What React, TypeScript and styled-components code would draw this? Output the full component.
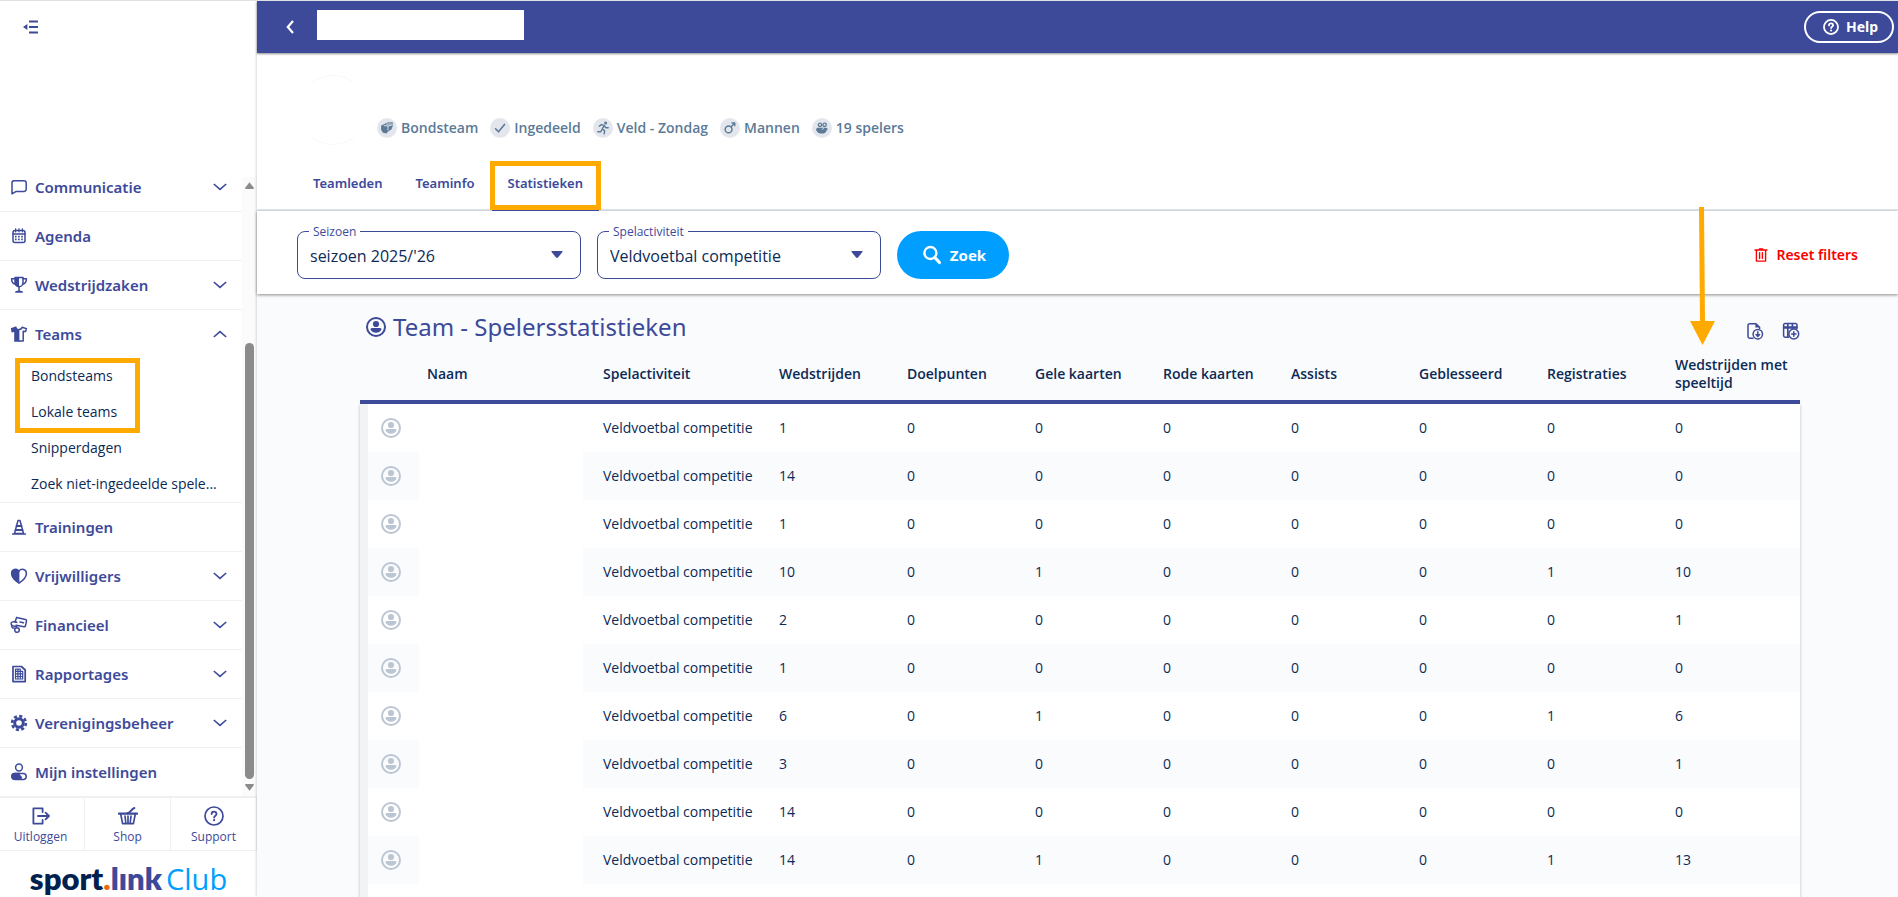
import React from "react";
import styled, { createGlobalStyle, css } from "styled-components";

const indigo = "#3d4a9a";
const navy = "#0b2a55";
const slate = "#5b7a97";
const orange = "#ffaa00";
const azure = "#009fff";
const line = "#eef0f2";
const body = `"Open Sans", "Noto Sans", sans-serif`;
const heading = `"Noto Sans", "Open Sans", sans-serif`;

const GlobalStyle = createGlobalStyle`
  *, *::before, *::after { box-sizing: border-box; }
  body { margin: 0; background: #fff; font-family: ${body}; font-size: 14px; color: ${navy}; }
  button, select { font: inherit; color: inherit; }
  a { color: inherit; text-decoration: none; }
`;

const Shell = styled.div`
  display: flex;
  height: 100vh;
  overflow: hidden;
  border-top: 1px solid #dfe2e3;
`;

/* ---------- sidebar ---------- */

const Sidebar = styled.aside`
  display: flex;
  flex-direction: column;
  flex: 0 0 257px;
  background: #fff;
`;

const SidebarTop = styled.div`
  flex: 0 0 162px;
  padding: 17px 22px;
`;

const PlainButton = styled.button`
  display: inline-flex;
  align-items: center;
  justify-content: center;
  padding: 0;
  border: 0;
  background: none;
  color: ${indigo};
  cursor: pointer;
`;

const NavArea = styled.div`
  display: flex;
  flex: 1;
  min-height: 0;
`;

const Nav = styled.nav`
  flex: 1;
  min-width: 0;
`;

const NavGroup = styled.div`
  border-bottom: 1px solid ${line};
`;

const NavItem = styled.a`
  display: flex;
  align-items: center;
  height: 48px;
  padding: 0 15px 0 10px;
  gap: 7px;
  color: ${indigo};
  font: 600 15px/20px ${heading};
`;

const NavText = styled.span`
  flex: 1;
`;

const SubList = styled.div`
  position: relative;
`;

const SubItem = styled.a`
  display: block;
  height: 36px;
  padding: 0 25px 0 31px;
  overflow: hidden;
  color: ${navy};
  font: 400 14px/36px ${body};
  text-overflow: ellipsis;
  white-space: nowrap;
`;

const SubHighlight = styled.span`
  position: absolute;
  top: 0;
  left: 15px;
  width: 125px;
  height: 75px;
  border: 5px solid ${orange};
  pointer-events: none;
`;

const ScrollTrack = styled.div`
  display: flex;
  flex-direction: column;
  align-items: center;
  width: 15px;
  margin-top: 14px;
  background: #fbfbfb;
`;

const ScrollArrow = styled.svg`
  display: block;
  flex: 0 0 17px;
  width: 9px;
`;

const ScrollSpace = styled.div`
  flex: 149;
`;

const ScrollThumb = styled.div`
  flex: 437;
  width: 9px;
  border-radius: 5px;
  background: #8b8b8b;
`;

const QuickLinks = styled.div`
  display: flex;
  border-top: 2px solid ${line};
  border-bottom: 1px solid ${line};
`;

const QuickLink = styled.a`
  display: flex;
  flex: 87 1 0;
  flex-direction: column;
  align-items: center;
  gap: 2px;
  height: 52px;
  padding-top: 8px;
  border-right: 1px solid ${line};
  color: ${indigo};
  font: 400 12px/18px ${body};
  &:first-child {
    flex-grow: 83;
    padding-right: 3px;
  }
`;

const Logo = styled.div`
  display: flex;
  align-items: baseline;
  justify-content: center;
  height: 46px;
  padding-top: 8px;
  color: #00214d;
  font: 800 31px/38px "Lato", sans-serif;
`;

const LogoDot = styled.span`
  color: #ee6a0c;
`;

const LogoLink = styled.span`
  color: ${indigo};
`;

const LogoClub = styled.span`
  margin-left: 4px;
  color: ${azure};
  font: 400 29px/38px "Open Sans", sans-serif;
`;

/* ---------- main ---------- */

const Main = styled.main`
  display: flex;
  flex: 1;
  flex-direction: column;
  min-width: 0;
  background: #fafbfd;
  box-shadow: 0 0 3px rgba(0, 0, 0, 0.25);
`;

const TopBar = styled.header`
  display: flex;
  align-items: center;
  flex: 0 0 52px;
  padding: 0 4px 0 24px;
  background: ${indigo};
  box-shadow: 0 1px 2px rgba(0, 0, 0, 0.45);
  z-index: 1;
`;

const BackButton = styled(PlainButton)`
  width: 18px;
  height: 24px;
  color: #fff;
`;

const TitleField = styled.div`
  width: 207px;
  height: 30px;
  margin: 0 auto 4px 18px;
  background: #fff;
`;

const HelpButton = styled.button`
  display: flex;
  align-items: center;
  justify-content: center;
  gap: 7px;
  width: 90px;
  height: 32px;
  padding: 0 4px 0 7px;
  border: 2px solid #fff;
  border-radius: 16px;
  background: transparent;
  color: #fff;
  font: 700 14px/20px ${heading};
`;

const TeamPanel = styled.section`
  background: #fff;
  border-bottom: 2px solid #e3e8ed;
`;

const TeamInfo = styled.div`
  display: flex;
  align-items: flex-end;
  gap: 9px;
  height: 108px;
  padding: 0 41px 16px;
`;

const TeamCrest = styled.div`
  width: 70px;
  height: 70px;
  border: 1px solid #f8f8f9;
  border-radius: 50%;
  clip-path: inset(0 14px);
`;

const Badges = styled.ul`
  display: flex;
  gap: 12px;
  margin: 0 0 7px;
  padding: 0;
  list-style: none;
`;

const Badge = styled.li`
  display: flex;
  align-items: center;
  gap: 4px;
  color: ${slate};
  font: 600 14px/20px ${body};
`;

const BadgeIcon = styled.span`
  display: flex;
  align-items: center;
  justify-content: center;
  width: 20px;
  height: 20px;
  border-radius: 50%;
  background: #e3e7ed;
`;

const Tabs = styled.nav`
  display: flex;
  gap: 1px;
  padding: 0 40px;
  margin-bottom: -2px;
`;

const Tab = styled.a<{ $active?: boolean }>`
  position: relative;
  height: 50px;
  padding: 12px 16px 0;
  color: ${indigo};
  font: 600 13px/20px ${heading};
  ${(p) =>
    p.$active &&
    css`
      border-bottom: 2px solid ${indigo};
      &::after {
        content: "";
        position: absolute;
        inset: 0 -2px -1px;
        border: 5px solid ${orange};
      }
    `}
`;

const FilterBar = styled.form`
  display: flex;
  align-items: center;
  gap: 16px;
  flex: 0 0 83px;
  padding: 4px 40px 0;
  background: #fff;
  box-shadow: 0 1px 3px rgba(0, 0, 0, 0.45);
`;

const Field = styled.div`
  position: relative;
  flex: 0 1 284px;
`;

const FieldLabel = styled.label`
  position: absolute;
  top: -7px;
  left: 12px;
  padding: 0 4px;
  background: #fff;
  color: ${indigo};
  font: 400 12px/16px ${body};
`;

const Select = styled.select`
  display: block;
  width: 100%;
  height: 48px;
  padding: 2px 40px 0 12px;
  border: 1px solid ${indigo};
  border-radius: 8px;
  appearance: none;
  background: #fff;
  color: ${navy};
  font: 400 16px/24px ${body};
`;

const Caret = styled.svg`
  position: absolute;
  top: 20px;
  right: 18px;
  pointer-events: none;
`;

const SearchButton = styled.button`
  display: flex;
  align-items: center;
  justify-content: center;
  gap: 8px;
  width: 112px;
  height: 48px;
  padding: 0 5px 0 7px;
  border: 0;
  border-radius: 24px;
  background: ${azure};
  color: #fff;
  font: 700 15px/20px ${heading};
`;

const ResetButton = styled(PlainButton)`
  gap: 8px;
  margin-left: auto;
  color: #fa0000;
  font: 600 14px/20px ${heading};
`;

const Content = styled.section`
  display: flex;
  flex: 1;
  flex-direction: column;
  min-height: 0;
  padding: 0 98px 0 103px;
`;

const TitleRow = styled.div`
  display: flex;
  align-items: center;
  height: 54px;
  padding: 12px 0 0 6px;
`;

const PageTitle = styled.h1`
  flex: 1;
  margin: 0 0 0 7px;
  color: ${indigo};
  font: 400 24px/32px ${heading};
`;

const Tools = styled.div`
  display: flex;
  gap: 18px;
  padding-top: 8px;
`;

const Table = styled.table`
  width: 100%;
  border-collapse: separate;
  border-spacing: 0;
  table-layout: fixed;
`;

const Th = styled.th`
  position: relative;
  height: 56px;
  padding: 0 12px;
  border-bottom: 4px solid ${indigo};
  color: ${navy};
  font: 600 14px/18px ${body};
  text-align: left;
  &:last-child {
    padding-right: 4px;
  }
`;

const Pointer = styled.svg`
  position: absolute;
  left: 27px;
  bottom: 55px;
  z-index: 2;
`;

const Row = styled.tr`
  background: #fff;
  &:nth-child(even) {
    background: #fafbfd;
  }
`;

const Td = styled.td`
  height: 48px;
  padding: 0 12px;
  font: 400 14px/20px ${body};
`;

const AvatarTd = styled(Td)`
  padding: 0 13px;
  border-left: 8px solid #f2f3f5;
  color: #bcc6d3;
  svg {
    display: block;
  }
`;

const NameTd = styled(Td)`
  padding: 0 8px 0 4px;
`;

const NameBlank = styled.div`
  height: 48px;
  background: #fff;
`;

const TableCard = styled.div`
  flex: 1;
  min-height: 0;
`;

const Sheet = styled.tbody`
  box-shadow: 0 1px 3px rgba(0, 0, 0, 0.25);
`;

/* ---------- icons ---------- */

type IconProps = { size?: number; children: React.ReactNode; box?: number };

const IconSvg = styled.svg`
  flex-shrink: 0;
`;

const Svg = ({ size = 18, box = 18, children }: IconProps) => (
  <IconSvg
    width={size}
    height={size}
    viewBox={`0 0 ${box} ${box}`}
    fill="none"
    stroke="currentColor"
    strokeWidth={1.5}
    strokeLinecap="round"
    strokeLinejoin="round"
    aria-hidden="true"
  >
    {children}
  </IconSvg>
);

const solid = { fill: "currentColor", stroke: "none" } as const;

const icons = {
  collapse: (
    <Svg>
      <path d="M7 3.5h9M7 9h9M7 14.5h9" strokeWidth={1.8} strokeLinecap="butt" />
      <path d="M5.4 6v6L1 9z" {...solid} />
    </Svg>
  ),
  chat: (
    <Svg>
      <path d="M4 2.8h10a2.2 2.2 0 0 1 2.2 2.2v6.2a2.2 2.2 0 0 1-2.2 2.2H6.2L2 15.8V5A2.2 2.2 0 0 1 4 2.8z" />
    </Svg>
  ),
  calendar: (
    <Svg>
      <rect x="3" y="3.6" width="12" height="12" rx="2" />
      <path d="M3 7h12" strokeWidth={1.3} />
      <path d="M5.6 1.8v3M9 1.8v3M12.4 1.8v3" strokeWidth={1.3} />
      <path d="M5 9.6h8M5 12.4h8" strokeWidth={1.6} strokeDasharray="1.6 1.5" strokeLinecap="butt" />
    </Svg>
  ),
  trophy: (
    <Svg>
      <path d="M5 1.5h8v5.2a4 4 0 0 1-8 0z" />
      <path d="M5 1.5h4v9.2a4 4 0 0 1-4-4z" {...solid} />
      <path d="M5 2.8H1.6c0 3.4 1.4 5 3.8 5.4M13 2.8h3.4c0 3.4-1.4 5-3.8 5.4M9 10.6v4.6" />
      <path d="M5 16.8c0-1.6 1.4-2.4 4-2.4s4 .8 4 2.4z" {...solid} />
    </Svg>
  ),
  shirt: (
    <Svg>
      <path d="M6.200 1.200.800 3.200 1.600 7.400 4.200 7v9.800H9.400V4.400C7.600 4.200 6.600 3 6.200 1.200z" {...solid} />
      <path d="M9 4.400c1.700 0 2.800-.9 3.200-2.200l4.200 1.400-.8 3-2.400-.3v9.700H9" />
    </Svg>
  ),
  cone: (
    <Svg>
      <path d="M8 2.500h2l3.500 13h-9zM2.600 16h12.800" />
      <path d="M6.600 8h4.800M5.600 12h6.800" strokeWidth={2} />
    </Svg>
  ),
  heart: (
    <Svg>
      <path d="M9 16.200C5 13.600 1.600 10.400 1.600 6.300c0-4 5-5.400 7.400-2.200 2.400-3.200 7.400-1.800 7.400 2.200 0 4.100-3.400 7.300-7.400 9.900z" />
      <path d="M9.400 16.400C5 13.600 1.400 10.400 1.400 6.300c0-4 5.400-5.600 8-2.200z" {...solid} />
    </Svg>
  ),
  money: (
    <Svg>
      <path d="M6.600 1.600 15.400 3.400q1.300.3 1.100 1.600l-1 4.800q-.3 1.200-1.500 1L6 9.200M6.600 1.600 5 6" strokeWidth={1.500} />
      <path d="M6.800 6.200C3.400 5.200.8 5.800 1.100 8c.3 2 2.900 2.200 5.500 2.600M10 6l3.400.8" strokeWidth={1.500} />
      <path d="M1.600 9.200c0 2 1 3 2.600 2.800" strokeWidth={1.500} />
      <circle cx="7" cy="14" r="2.300" strokeWidth={1.500} />
    </Svg>
  ),
  report: (
    <Svg>
      <path d="M3 1.500h8.400L15.200 5v11.600H3z" strokeWidth={1.700} />
      <path d="M5.500 6.400h7.200v7.600H5.500zM7.900 4.200v9.800M10.300 4.200v9.800M5.500 4.200h4.800M5.500 4.200v3M5.500 8.900h7.200M5.500 11.500h7.200" strokeWidth={1.200} />
    </Svg>
  ),
  gear: (
    <Svg>
      <circle cx="9" cy="9" r="4.300" strokeWidth={3} />
      <circle cx="9" cy="9" r="6.900" strokeWidth={2.600} strokeDasharray="3.100 2.320" strokeLinecap="butt" />
    </Svg>
  ),
  person: (
    <Svg>
      <circle cx="9" cy="4.500" r="3.400" />
      <rect x="1.800" y="10.400" width="14.400" height="6" rx="3" />
      <path d="M9.600 9.700H5a3.700 3.700 0 0 0 0 7.400h4c2 0 3-1.400 3-2.600 0-2-2.400-1.600-2.400-4.800z" {...solid} />
    </Svg>
  ),
  down: (
    <svg width="14" height="8" viewBox="0 0 14 8" fill="none" stroke="currentColor" strokeWidth="1.6" aria-hidden="true">
      <path d="M.8 1 7 6.400 13.200 1" />
    </svg>
  ),
  up: (
    <svg width="14" height="8" viewBox="0 0 14 8" fill="none" stroke="currentColor" strokeWidth="1.6" aria-hidden="true">
      <path d="M.8 7 7 1.600 13.200 7" />
    </svg>
  ),
  logout: (
    <Svg size={20} box={20}>
      <path d="M11.600 6V2.400H2.400v15.200h9.200V14M7 10h11M14.600 6.600 18 10l-3.400 3.400" strokeWidth={1.800} />
    </Svg>
  ),
  basket: (
    <Svg size={20} box={20}>
      <path d="M1 7.600h18" strokeWidth={2.200} />
      <path d="M2.800 8.500 4.600 17.600h10.800l1.800-9.100M7 10l.8 7M10 10v7M13 10l-.8 7" strokeWidth={1.700} />
      <path d="M9 7.400C13 6.600 13 3 16.400 2" strokeWidth={2} />
    </Svg>
  ),
  help: (
    <Svg size={20} box={20}>
      <circle cx="10" cy="10" r="9" strokeWidth={1.700} />
      <path d="M7.600 8c0-3.200 4.900-3.200 4.900 0 0 1.700-2.400 1.700-2.400 3.600" strokeWidth={1.800} />
      <circle cx="10.100" cy="14.200" r="1.100" {...solid} />
    </Svg>
  ),
  helpSmall: (
    <Svg size={16} box={20}>
      <circle cx="10" cy="10" r="8.800" strokeWidth={2.200} />
      <path d="M7.400 8c0-3.400 5.200-3.400 5.200 0 0 1.700-2.500 1.700-2.500 3.400" strokeWidth={2.200} />
      <circle cx="10.100" cy="14.400" r="1.300" {...solid} />
    </Svg>
  ),
  back: (
    <svg width="8" height="14" viewBox="0 0 8 14" fill="none" stroke="currentColor" strokeWidth="2.2" aria-hidden="true">
      <path d="M7 1 1.800 7 7 13" />
    </svg>
  ),
  search: (
    <Svg size={20} box={20}>
      <circle cx="8.400" cy="8" r="6" strokeWidth={2.400} />
      <path d="m12.800 12.500 4.600 5" strokeWidth={3.200} />
    </Svg>
  ),
  bin: (
    <Svg size={14} box={14}>
      <path d="M1 2h12M5.400.9h3.200M2.400 2.400v10.700h9.200V2.400M5.600 4.600v6M8.400 4.600v6" strokeWidth={1.400} />
    </Svg>
  ),
  exportFile: (
    <Svg>
      <path d="M7 16.200H3.600A1.600 1.600 0 0 1 2 14.600V3.400a1.600 1.600 0 0 1 1.600-1.600H10l3.600 3.400v1.400" />
      <path d="M9.400 1.600v4h4.400z" {...solid} />
      <circle cx="11.800" cy="12.200" r="4.700" />
      <path d="M11.800 9.800v4.400M10 12.600l1.800 1.900 1.800-1.900" />
    </Svg>
  ),
  columnsAdd: (
    <Svg>
      <path d="M6.400 15.200H3.200A1.600 1.600 0 0 1 1.600 13.600V3A1.400 1.400 0 0 1 3 1.600h10.600A1.400 1.400 0 0 1 15 3v3.400M1.600 5.800H15" />
      <path d="M5.800 2v13M10.400 2v4.500" strokeWidth={1.700} />
      <path d="M2 5.400h12.600" strokeWidth={2.200} />
      <circle cx="11.800" cy="12" r="4.900" />
      <path d="M11.800 9.800v4.400M9.600 12h4.400" />
    </Svg>
  ),
  avatar: (
    <Svg size={20} box={20}>
      <circle cx="10" cy="10" r="9" strokeWidth={2} />
      <circle cx="10" cy="7" r="3.100" {...solid} />
      <path d="M6 11h8c1.200 0 1.600.8 1.400 1.600-.6 2-2.600 3.200-5.400 3.200s-4.800-1.200-5.400-3.200C4.400 11.800 4.800 11 6 11z" {...solid} />
    </Svg>
  ),
  ball: (
    <Svg size={14} box={14}>
      <path d="M5.400 2.400 7.400 1.400 12.600 1.200 12.800 5 11.400 8.600 8.400 10.200 6.400 12.600 3 11.800 1 8.800 1.200 4.600z" {...solid} />
      <path d="M4.200 4.600 8 5v4M8 5l4.200-1M6.400 3.200l5-.2" stroke="#e3e7ed" strokeWidth={0.900} />
    </Svg>
  ),
  check: (
    <Svg size={12} box={12}>
      <path d="M1.600 6.800 4.500 9.800 10.500 2.400" strokeWidth={1.600} />
    </Svg>
  ),
  runner: (
    <Svg size={14} box={14}>
      <circle cx="9.600" cy="2" r="1.500" {...solid} />
      <path d="M3.200 5.200 5.400 3.600l2.800.8L6.200 8l2.400 1.600-.4 3.200M6 8.600 4.600 10.800H1.800M8.400 5l1.400 1.800h2.400" strokeWidth={1.400} />
    </Svg>
  ),
  male: (
    <Svg size={14} box={14}>
      <circle cx="5.600" cy="8.400" r="3.400" strokeWidth={1.500} />
      <path d="M8.200 5.800 11.600 2.200M9 2h2.800v2.800" strokeWidth={1.300} />
    </Svg>
  ),
  players: (
    <Svg size={14} box={14}>
      <circle cx="5" cy="3.800" r="1.700" strokeWidth={1.300} />
      <circle cx="9.600" cy="3.800" r="1.700" strokeWidth={1.300} />
      <path d="M3 6.800h8.400c1.600.2 1.600 2.200.2 2.600-.4 2-2 3.200-4.600 3.200S2.400 11.800 2 10.200C.4 9.600 1 6.800 3 6.800z" {...solid} />
      <path d="M7.200 8.600 8.800 7" stroke="#e3e7ed" strokeWidth={0.900} />
    </Svg>
  ),
};

type IconName = keyof typeof icons;

/* ---------- data ---------- */

const navTop: [IconName, string, boolean][] = [
  ["chat", "Communicatie", true],
  ["calendar", "Agenda", false],
  ["trophy", "Wedstrijdzaken", true],
];

const navBottom: [IconName, string, boolean][] = [
  ["cone", "Trainingen", false],
  ["heart", "Vrijwilligers", true],
  ["money", "Financieel", true],
  ["report", "Rapportages", true],
  ["gear", "Verenigingsbeheer", true],
  ["person", "Mijn instellingen", false],
];

const subItems = ["Bondsteams", "Lokale teams", "Snipperdagen", "Zoek niet-ingedeelde spele..."];

const badges: [IconName, string][] = [
  ["ball", "Bondsteam"],
  ["check", "Ingedeeld"],
  ["runner", "Veld - Zondag"],
  ["male", "Mannen"],
  ["players", "19 spelers"],
];

const columns = [
  "Naam",
  "Spelactiviteit",
  "Wedstrijden",
  "Doelpunten",
  "Gele kaarten",
  "Rode kaarten",
  "Assists",
  "Geblesseerd",
  "Registraties",
  "Wedstrijden met speeltijd",
];

const columnWidths = [55, 176, 176, 128, 128, 128, 128, 128, 128, 128];

const stats = [
  [1, 0, 0, 0, 0, 0, 0, 0],
  [14, 0, 0, 0, 0, 0, 0, 0],
  [1, 0, 0, 0, 0, 0, 0, 0],
  [10, 0, 1, 0, 0, 0, 1, 10],
  [2, 0, 0, 0, 0, 0, 0, 1],
  [1, 0, 0, 0, 0, 0, 0, 0],
  [6, 0, 1, 0, 0, 0, 1, 6],
  [3, 0, 0, 0, 0, 0, 0, 1],
  [14, 0, 0, 0, 0, 0, 0, 0],
  [14, 0, 1, 0, 0, 0, 1, 13],
];

/* ---------- parts ---------- */

const NavEntry = ({ entry: [icon, text, expandable] }: { entry: [IconName, string, boolean] }) => (
  <NavGroup>
    <NavItem href="#">
      {icons[icon]}
      <NavText>{text}</NavText>
      {expandable && icons.down}
    </NavItem>
  </NavGroup>
);

const FilterField = ({ id, label, value }: { id: string; label: string; value: string }) => (
  <Field>
    <Select id={id} defaultValue={value}>
      <option>{value}</option>
    </Select>
    <FieldLabel htmlFor={id}>{label}</FieldLabel>
    <Caret width="12" height="7" viewBox="0 0 12 7" aria-hidden="true">
      <path d="M1 0h10q1 .2.400 1L7 6.500q-1 .8-2 0L.6 1Q0 .2 1 0z" fill={indigo} />
    </Caret>
  </Field>
);

export default function App() {
  return (
    <>
      <GlobalStyle />
      <Shell>
        <Sidebar>
          <SidebarTop>
            <PlainButton aria-label="Menu inklappen">{icons.collapse}</PlainButton>
          </SidebarTop>
          <NavArea>
            <Nav>
              {navTop.map((e) => (
                <NavEntry key={e[1]} entry={e} />
              ))}
              <NavGroup>
                <NavItem href="#">
                  {icons.shirt}
                  <NavText>Teams</NavText>
                  {icons.up}
                </NavItem>
                <SubList>
                  {subItems.map((t) => (
                    <SubItem href="#" key={t}>
                      {t}
                    </SubItem>
                  ))}
                  <SubHighlight />
                </SubList>
              </NavGroup>
              {navBottom.map((e) => (
                <NavEntry key={e[1]} entry={e} />
              ))}
            </Nav>
            <ScrollTrack aria-hidden="true">
              <ScrollArrow viewBox="0 0 9 7">
                <path d="M4.500.2 9 6q-.2 1-1 1H1q-.8 0-1-1z" fill="#8b8b8b" />
              </ScrollArrow>
              <ScrollSpace />
              <ScrollThumb />
              <ScrollArrow viewBox="0 0 9 7">
                <path d="M4.500 6.800 0 1q.2-1 1-1h7q.8 0 1 1z" fill="#8b8b8b" />
              </ScrollArrow>
            </ScrollTrack>
          </NavArea>
          <QuickLinks>
            <QuickLink href="#">
              {icons.logout}
              Uitloggen
            </QuickLink>
            <QuickLink href="#">
              {icons.basket}
              Shop
            </QuickLink>
            <QuickLink href="#">
              {icons.help}
              Support
            </QuickLink>
          </QuickLinks>
          <Logo>
            <span>sport</span>
            <LogoDot>.</LogoDot>
            <LogoLink>lınk</LogoLink>
            <LogoClub>Club</LogoClub>
          </Logo>
        </Sidebar>

        <Main>
          <TopBar>
            <BackButton aria-label="Terug">{icons.back}</BackButton>
            <TitleField />
            <HelpButton>
              {icons.helpSmall}
              Help
            </HelpButton>
          </TopBar>

          <TeamPanel>
            <TeamInfo>
              <TeamCrest />
              <Badges>
                {badges.map(([icon, text]) => (
                  <Badge key={text}>
                    <BadgeIcon>{icons[icon]}</BadgeIcon>
                    {text}
                  </Badge>
                ))}
              </Badges>
            </TeamInfo>
            <Tabs>
              <Tab href="#">Teamleden</Tab>
              <Tab href="#">Teaminfo</Tab>
              <Tab href="#" $active>
                Statistieken
              </Tab>
            </Tabs>
          </TeamPanel>

          <FilterBar onSubmit={(e) => e.preventDefault()}>
            <FilterField id="seizoen" label="Seizoen" value="seizoen 2025/'26" />
            <FilterField id="spelactiviteit" label="Spelactiviteit" value="Veldvoetbal competitie" />
            <SearchButton type="submit">
              {icons.search}
              Zoek
            </SearchButton>
            <ResetButton type="reset">
              {icons.bin}
              Reset filters
            </ResetButton>
          </FilterBar>

          <Content>
            <TitleRow>
              <PlainButton as="span">{icons.avatar}</PlainButton>
              <PageTitle>Team - Spelersstatistieken</PageTitle>
              <Tools>
                <PlainButton aria-label="Exporteren">{icons.exportFile}</PlainButton>
                <PlainButton aria-label="Kolommen kiezen">{icons.columnsAdd}</PlainButton>
              </Tools>
            </TitleRow>
            <TableCard>
              <Table>
                <colgroup>
                  {columnWidths.map((w, i) => (
                    <col key={i} width={w} />
                  ))}
                  <col />
                </colgroup>
                <thead>
                  <tr>
                    <Th aria-label="Foto" />
                    {columns.map((c, i) => (
                      <Th key={c} scope="col">
                        {c}
                        {i === columns.length - 1 && (
                          <Pointer width="25" height="138" viewBox="0 0 25 138" aria-hidden="true">
                            <path d="M9 0h5l1 114h10L12.500 138 0 114h10z" fill={orange} />
                          </Pointer>
                        )}
                      </Th>
                    ))}
                  </tr>
                </thead>
                <Sheet>
                  {stats.map((row, i) => (
                    <Row key={i}>
                      <AvatarTd>{icons.avatar}</AvatarTd>
                      <NameTd>
                        <NameBlank />
                      </NameTd>
                      <Td>Veldvoetbal competitie</Td>
                      {row.map((n, j) => (
                        <Td key={j}>{n}</Td>
                      ))}
                    </Row>
                  ))}
                  <Row>
                    <AvatarTd />
                    <Td colSpan={10} />
                  </Row>
                </Sheet>
              </Table>
            </TableCard>
          </Content>
        </Main>
      </Shell>
    </>
  );
}
